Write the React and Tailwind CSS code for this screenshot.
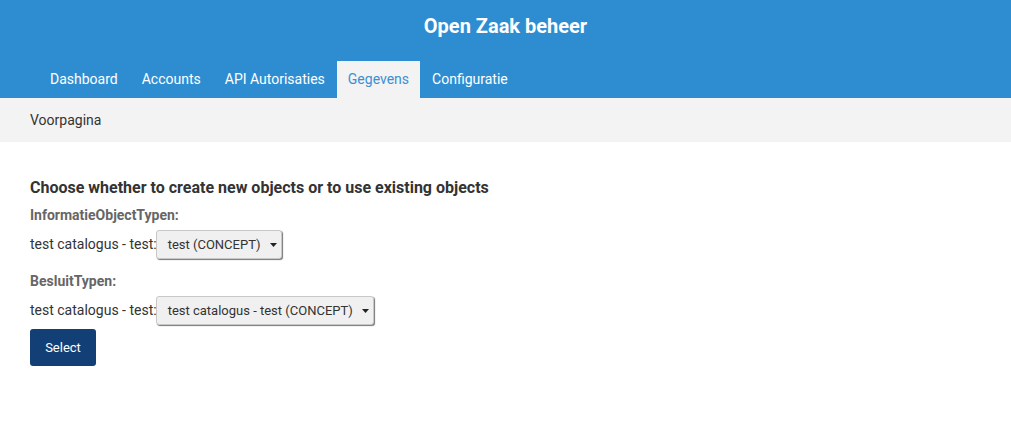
import React from "react";

function FakeSelect({ text, width }) {
  return (
    <div
      className={`flex items-center justify-between h-[29px] ${width} rounded-[3px] border border-[#c8c8c8] bg-[#f0f0f0] pl-[11px] pr-[4px] text-[13px] text-[#333] shadow-[1px_1px_1px_#777]`}
    >
      <span>{text}</span>
      <svg width="7" height="4" viewBox="0 0 7 4" className="mt-[1px]">
        <polygon points="0,0 7,0 3.5,4" fill="#222" />
      </svg>
    </div>
  );
}

export default function App() {
  const tabs = ["Dashboard", "Accounts", "API Autorisaties", "Gegevens", "Configuratie"];
  return (
    <div className="w-[1011px] h-[425px] bg-white font-['Roboto',sans-serif] text-[#333]">
      <header className="bg-[#2e8dd1] h-[98px] flex flex-col">
        <div className="h-[61px] flex items-center justify-center pb-[9px]">
          <h1 className="text-white text-[20px] font-bold">Open Zaak beheer</h1>
        </div>
        <nav className="flex pl-[38px] h-[37px]">
          {tabs.map((t) => (
            <div
              key={t}
              className={
                t === "Gegevens"
                  ? "px-[11px] flex items-center bg-[#f3f3f3] text-[#3b8fd3] text-[14px]"
                  : "px-3 flex items-center text-white text-[14px]"
              }
            >
              {t}
            </div>
          ))}
        </nav>
      </header>
      <div className="bg-[#f3f3f3] h-[44px] flex items-center px-[30px] text-[14px] text-[#333]">
        Voorpagina
      </div>
      <main className="px-[30px] pt-[36px]">
        <h2 className="text-[16px] font-bold text-[#333] leading-[20px]">
          Choose whether to create new objects or to use existing objects
        </h2>
        <div className="mt-[8px] text-[14px] font-bold text-[#666] leading-[18px]">
          InformatieObjectTypen:
        </div>
        <div className="mt-[6px] flex items-center text-[14px]">
          <span className="-mr-[1px]">test catalogus - test:</span>
          <FakeSelect text="test (CONCEPT)" width="w-[126px]" />
        </div>
        <div className="mt-[13px] text-[14px] font-bold text-[#666] leading-[18px]">
          BesluitTypen:
        </div>
        <div className="mt-[6px] flex items-center text-[14px]">
          <span className="-mr-[1px]">test catalogus - test:</span>
          <FakeSelect text="test catalogus - test (CONCEPT)" width="w-[218px]" />
        </div>
        <button className="mt-[4px] h-[37px] w-[66px] rounded-[3px] bg-[#123f75] text-white text-[13px]">
          Select
        </button>
      </main>
    </div>
  );
}
